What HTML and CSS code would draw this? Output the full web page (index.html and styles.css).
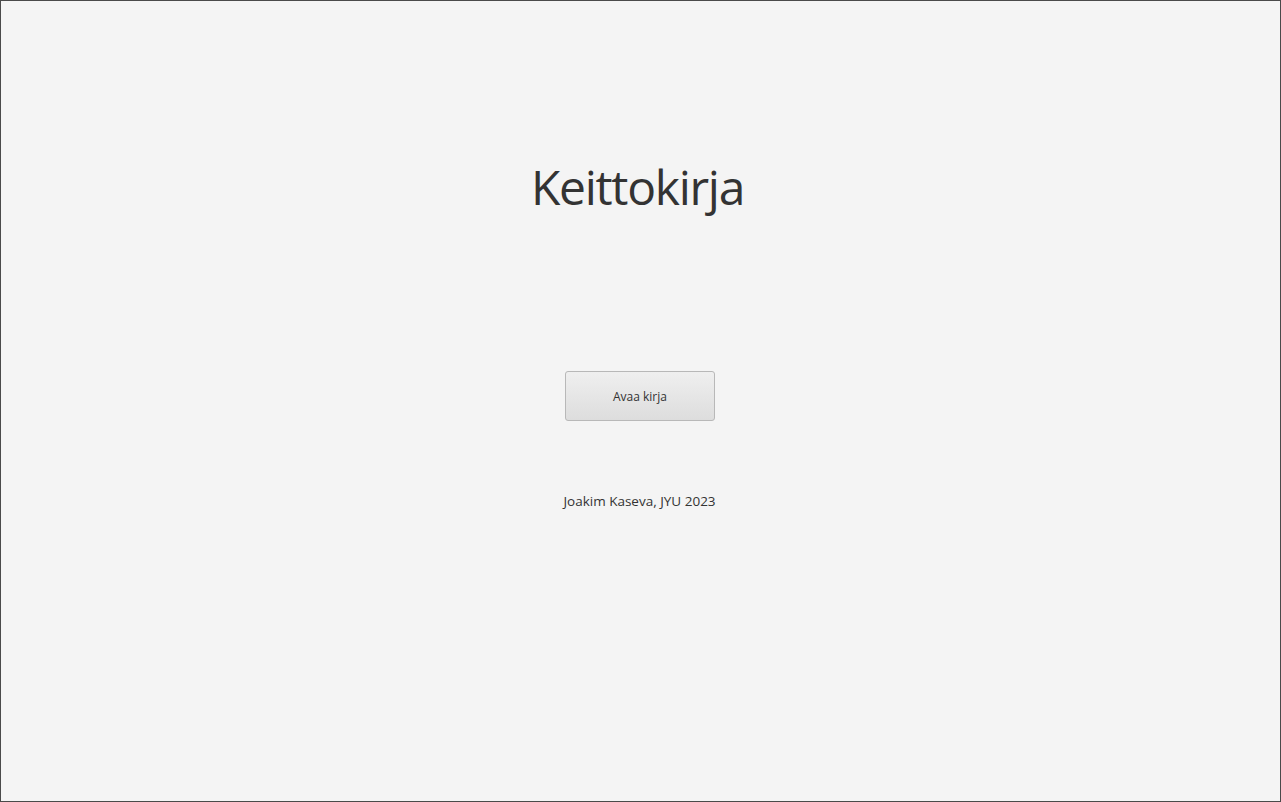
FILE: index.html
```html
<!DOCTYPE html>
<html lang="fi">
<head>
<meta charset="utf-8">
<title>Keittokirja</title>
<link rel="stylesheet" href="styles.css">
</head>
<body>
<main class="window">
  <h1 class="title">Keittokirja</h1>
  <button class="open-btn" type="button">Avaa kirja</button>
  <p class="credits">Joakim Kaseva, JYU 2023</p>
</main>
</body>
</html>
```
FILE: styles.css
```css
html, body {
  margin: 0;
  padding: 0;
  height: 100%;
}
body {
  font-family: "Open Sans", "Noto Sans", "Liberation Sans", sans-serif;
  color: #333333;
  background: #f4f4f4;
}
.window {
  box-sizing: border-box;
  width: 1281px;
  height: 802px;
  border: 1px solid #4a4a4a;
  background: #f4f4f4;
  display: flex;
  flex-direction: column;
  align-items: center;
  padding-top: 150px;
}
.title {
  margin: 0 6px 0 0;
  font-weight: 400;
  font-size: 48px;
  line-height: 72px;
  color: #333333;
  letter-spacing: -1.3px;
}
.open-btn {
  margin: 148px 1px 0 0;
  width: 150px;
  height: 50px;
  border: 1px solid #b8b8b8;
  border-radius: 3px;
  background: linear-gradient(to bottom, #efefef 0%, #dddddd 100%);
  font-family: inherit;
  font-size: 12px;
  color: #333333;
  padding: 0;
  cursor: default;
}
.credits {
  margin: 71px 2px 0 0;
  font-size: 13.5px;
  line-height: 18px;
  color: #333333;
}
```
